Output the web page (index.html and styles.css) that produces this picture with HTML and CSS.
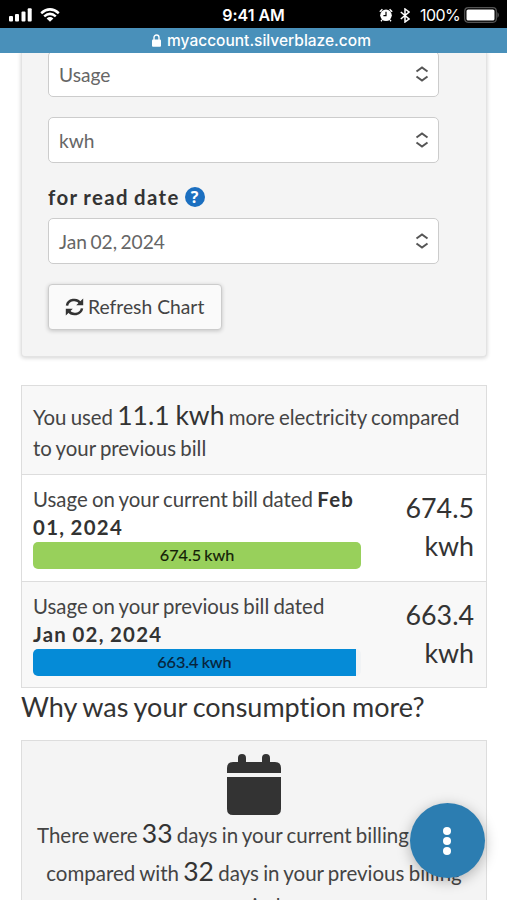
FILE: index.html
```html
<!DOCTYPE html>
<html lang="en">
<head>
<meta charset="utf-8">
<title>My Account</title>
<link rel="stylesheet" href="styles.css">
</head>
<body>
<div class="screen">
  <header class="chrome">
    <div class="status">
      <div class="status-left">
        <svg width="24" height="14" viewBox="0 0 24 14" fill="#fff"><rect x="0" y="8" width="4" height="5.500" rx="1"/><rect x="6" y="6" width="4" height="7.500" rx="1"/><rect x="12.500" y="3.500" width="4" height="10" rx="1"/><rect x="18.700" y="0.300" width="4" height="13.200" rx="1"/></svg>
        <svg class="wifi" width="20" height="14" viewBox="0 0 20 14"><g fill="none" stroke="#fff" stroke-width="2.500"><path d="M1.200 5.200Q10-2.400 18.800 5.200"/><path d="M4.200 8.400Q10 3.400 15.800 8.400"/></g><path d="M10 13.800L6.600 10.400Q10 7.600 13.400 10.400Z" fill="#fff"/></svg>
      </div>
      <span class="clock">9:41 AM</span>
      <div class="status-right">
        <svg width="14" height="14" viewBox="0 0 14 14"><circle cx="7" cy="7.300" r="5.800" fill="#fff"/><path d="M.8 3.800L3.400 1.200M13.200 3.800L10.600 1.200M3 12l-1 1.200M11 12l1 1.200" stroke="#fff" stroke-width="1.400"/><path d="M7 3.800V7.700H4.400" fill="none" stroke="#000" stroke-width="1.200"/></svg>
        <svg class="bt" width="10" height="15" viewBox="0 0 10 15"><path d="M.8 4L9 11 5 14V1L9 4 .8 11" fill="none" stroke="#fff" stroke-width="1.500"/></svg>
        <span class="percent">100%</span>
        <svg width="36" height="16" viewBox="0 0 36 16"><rect x=".7" y=".7" width="31.600" height="14.600" rx="3.500" fill="none" stroke="#555" stroke-width="1.200"/><rect x="2.500" y="2.400" width="28" height="11.200" rx="1.600" fill="#fff"/><path d="M33.500 5Q36 8 33.500 11Z" fill="#666"/></svg>
      </div>
    </div>
    <div class="address">
      <svg width="9" height="13" viewBox="0 0 9 13"><rect x="0" y="5.500" width="9" height="7.300" rx="1" fill="#fff"/><path d="M2 6V3.500a2.500 2.500 0 0 1 5 0V6" fill="none" stroke="#fff" stroke-width="1.400"/></svg>
      <span>myaccount.silverblaze.com</span>
    </div>
  </header>

  <main class="content">
    <section class="filters">
      <div class="select"><span>Usage</span><svg width="14" height="16" viewBox="0 0 14 16"><path d="M1.500 5.500L7 1.500l5.500 4M1.500 10.500l5.500 4 5.500-4"/></svg></div>
      <div class="select"><span>kwh</span><svg width="14" height="16" viewBox="0 0 14 16"><path d="M1.500 5.500L7 1.500l5.500 4M1.500 10.500l5.500 4 5.500-4"/></svg></div>
      <div class="field-label"><span>for read date</span><span class="help">?</span></div>
      <div class="select"><span>Jan 02, 2024</span><svg width="14" height="16" viewBox="0 0 14 16"><path d="M1.500 5.500L7 1.500l5.500 4M1.500 10.500l5.500 4 5.500-4"/></svg></div>
      <button class="refresh" type="button">
        <svg width="19" height="18" viewBox="0 0 19 18"><g fill="none" stroke="#333" stroke-width="2.500"><path d="M2 7.600A7.300 6.600 0 0 1 15.500 5.200"/><path d="M17 10.400A7.300 6.600 0 0 1 3.500 12.800"/></g><path d="M18.200.5V7.200H11.200ZM.8 17.500V10.800H7.800Z" fill="#333"/></svg>
        <span>Refresh Chart</span>
      </button>
    </section>

    <section class="usage">
      <p class="summary">You used <span class="big">11.1 kwh</span> more electricity compared<br>to your previous bill</p>
      <div class="bill">
        <div class="bill-main">
          <p>Usage on your current bill dated <b>Feb<br>01, 2024</b></p>
          <div class="track"><div class="bar current">674.5 kwh</div></div>
        </div>
        <div class="amount">674.5<br>kwh</div>
      </div>
      <div class="bill alt">
        <div class="bill-main">
          <p>Usage on your previous bill dated<br><b>Jan 02, 2024</b></p>
          <div class="track"><div class="bar previous" style="width:98.4%">663.4 kwh</div></div>
        </div>
        <div class="amount">663.4<br>kwh</div>
      </div>
    </section>

    <h2 class="why">Why was your consumption more?</h2>

    <section class="reason">
      <svg class="calendar" width="54" height="61" viewBox="0 0 54 61" fill="#333"><path d="M0 19V14Q0 8 6 8H11V4a4 4 0 0 1 8 0V8H35V4a4 4 0 0 1 8 0V8H48Q54 8 54 14V19ZM0 23H54V55Q54 61 48 61H6Q0 61 0 55Z"/></svg>
      <p>There were <span class="big">33</span> days in your current billing period<br>compared with <span class="big">32</span> days in your previous billing</p>
      <p class="last">period.</p>
    </section>
  </main>

  <button class="fab" type="button" aria-label="Menu"><i></i><i></i><i></i></button>
</div>
</body>
</html>
```
FILE: styles.css
```css
* { box-sizing: border-box; }
body { margin: 0; background: #fff; }
p, h2 { margin: 0; font-weight: 400; }
button { font: inherit; color: inherit; }
svg { display: block; flex: none; }

.screen {
  position: relative;
  width: 507px;
  height: 900px;
  overflow: hidden;
  font-family: Lato, sans-serif;
  font-size: 20.4px;
  line-height: 28px;
  font-variant-ligatures: none;
  word-spacing: -1px;
  color: #444;
}

.chrome {
  position: relative;
  z-index: 1;
  height: 53px;
  color: #fff;
  font-family: Inter, sans-serif;
  word-spacing: 0;
}
.status {
  display: grid;
  grid-template-columns: 1fr auto 1fr;
  align-items: center;
  height: 28px;
  padding: 2px 9px 0 9px;
  background: #000;
}
.status-left, .status-right { display: flex; align-items: center; }
.wifi { margin-left: 7px; }
.status-right { justify-content: flex-end; margin-right: -2px; }
.clock { font-size: 16px; font-weight: 600; line-height: 20px; }
.bt { margin-left: 7px; }
.percent { margin: 0 4px 0 10px; font-size: 16px; line-height: 20px; letter-spacing: -.6px; }
.address {
  display: flex;
  justify-content: center;
  align-items: center;
  gap: 6px;
  height: 25px;
  padding: 0 0 0 16px;
  background: #4990ba;
  font-size: 15.5px;
  font-weight: 500;
  line-height: 20px;
}

.content { margin: -2px 20px 0 21px; }

.filters {
  height: 306px;
  padding: 0 47px 0 26px;
  border: solid #e3e3e3;
  border-width: 0 1px 1px;
  border-radius: 0 0 4px 4px;
  background: #f4f4f4;
  box-shadow: 0 1px 4px rgba(0, 0, 0, .18);
}
.select {
  display: flex;
  justify-content: space-between;
  align-items: center;
  height: 46px;
  margin-bottom: 20px;
  padding: 0 9px 0 10px;
  border: 1px solid #ccc;
  border-radius: 5px;
  background: #fff;
  color: #666;
  font-size: 19.2px;
  word-spacing: -1.500px;
}
.select span { padding-top: 2px; }
.select path { fill: none; stroke: #555; stroke-width: 2; }
.field-label {
  display: flex;
  align-items: center;
  gap: 5px;
  height: 35px;
  padding-bottom: 7px;
  font-weight: 700;
  letter-spacing: 1.350px;
  color: #333;
}
.help {
  display: grid;
  place-items: center;
  width: 20px;
  height: 20px;
  border-radius: 50%;
  background: #1b6fc0;
  color: #fff;
  font: 700 16px/20px "Open Sans", sans-serif;
  letter-spacing: 0;
}
.refresh {
  display: flex;
  align-items: center;
  gap: 4px;
  width: 174px;
  height: 46px;
  padding: 0 0 0 16px;
  border: 1px solid #ccc;
  border-radius: 4px;
  background: #fafafa;
  box-shadow: 0 1px 4px rgba(0, 0, 0, .2);
  font-size: 19.300px;
  white-space: nowrap;
}

.usage { margin-top: 28px; border: 1px solid #ddd; background: #fff; }
.summary { height: 88px; padding: 16px 11px 0; line-height: 31px; background: #f8f8f8; white-space: nowrap; }
.big { font-size: 26.500px; line-height: 0; color: #333; }
.bill {
  display: flex;
  justify-content: space-between;
  height: 106.500px;
  padding: 10px 12px 0 11px;
  border-top: 1px solid #ddd;
}
.bill.alt { background: #f8f8f8; }
.bill-main { width: 328px; white-space: nowrap; }
.bill b { letter-spacing: 1.300px; color: #333; }
.track { height: 27px; margin-top: 1px; border-radius: 5px; background: #f1f3f5; overflow: hidden; }
.bar { height: 27px; font-size: 16.200px; line-height: 26px; text-align: center; -webkit-text-stroke: .2px; }
.current { background: #98d05b; color: #132006; }
.previous { background: #058bd7; color: #082238; }
.amount { padding-top: 4px; font-size: 26.800px; line-height: 38px; text-align: right; color: #333; }

.why { height: 52px; font-size: 27px; line-height: 37px; color: #333; white-space: nowrap; }

.reason {
  height: 230px;
  padding-top: 13px;
  border: 1px solid #ddd;
  background: #f4f4f4;
  text-align: center;
  white-space: nowrap;
  font-size: 20.500px;
}
.calendar { margin: 0 auto; }
.reason p { padding-top: 1px; line-height: 38px; }
.reason .last { padding: 2px 0 0; line-height: 24px; }

.fab {
  position: absolute;
  top: 803px;
  left: 410px;
  display: flex;
  flex-direction: column;
  align-items: center;
  justify-content: center;
  gap: 2px;
  width: 75px;
  height: 75px;
  padding: 1px 1px 0 0;
  border: 0;
  border-radius: 50%;
  background: #2c7db1;
  box-shadow: 0 3px 14px rgba(0, 0, 0, .28);
}
.fab i { width: 8px; height: 8px; border-radius: 50%; background: #fff; }
```
